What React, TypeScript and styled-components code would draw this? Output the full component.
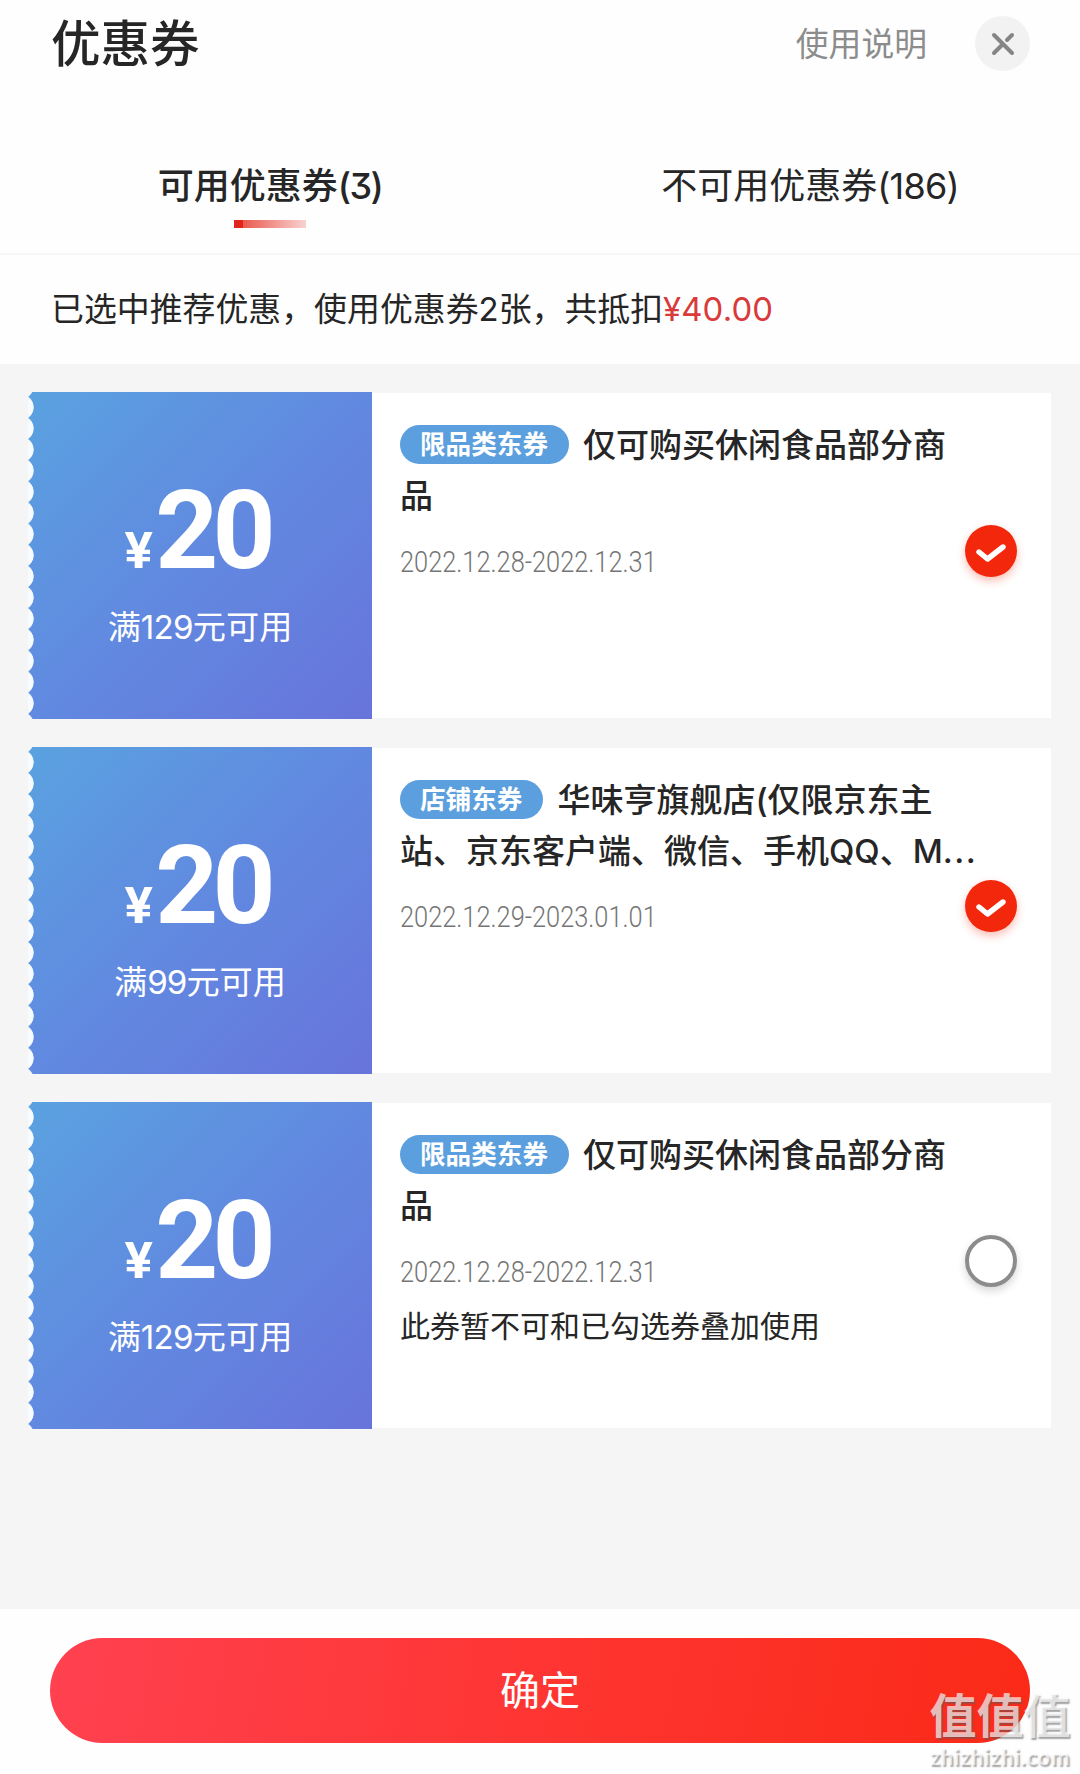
import React from "react";
import styled, { createGlobalStyle, css } from "styled-components";

const cjk = `"Noto Sans CJK SC", sans-serif`;

const GlobalStyle = createGlobalStyle`
  * { box-sizing: border-box; }
  html, body { margin: 0; padding: 0; background: #fefefe; }
  body {
    font-family: Inter, ${cjk};
    font-feature-settings: "cv09";
    color: #262626;
  }
  button { border: 0; margin: 0; padding: 0; font: inherit; color: inherit; background: none; }
`;

const Sheet = styled.div`
  position: relative;
  width: 1080px;
  height: 1774px;
  display: flex;
  flex-direction: column;
  overflow: hidden;
  background: #fefefe;
`;

const Header = styled.header`
  height: 116px;
  padding: 0 50px 29px 51px;
  display: flex;
  align-items: center;
`;

const Title = styled.h1`
  margin: 0 auto 0 0;
  font-size: 49.5px;
  font-weight: 500;
  line-height: 60px;
`;

const HelpLink = styled.a`
  font-size: 32.8px;
  line-height: 40px;
  color: #8c8c8c;
  margin-right: 48px;
`;

const CloseButton = styled.button`
  width: 55px;
  height: 55px;
  border-radius: 50%;
  background: #f2f2f2;
  display: grid;
  place-items: center;
`;

const Tabs = styled.nav`
  height: 139px;
  display: grid;
  grid-template-columns: 1fr 1fr;
  border-bottom: 2px solid #f6f6f6;
`;

const Tab = styled.button<{ $active?: boolean }>`
  display: flex;
  flex-direction: column;
  align-items: center;
  padding-top: 46px;
  font-size: 36px;
  line-height: 48px;
  font-weight: ${(p) => (p.$active ? 500 : 400)};
`;

const TabCount = styled.span<{ $track: string }>`
  letter-spacing: ${(p) => p.$track};
`;

const Underline = styled.span`
  width: 72px;
  height: 8px;
  margin-top: 10px;
  background: linear-gradient(90deg, #e1251b 0 9px, #ea5a50 9px, #f8d3d0 100%);
`;

const Summary = styled.p`
  margin: 0;
  height: 109px;
  padding: 0 51px 2px;
  display: flex;
  align-items: center;
  font-size: 32.9px;
  line-height: 40px;
  white-space: pre;
`;

const Amount = styled.span`
  color: #d93a3a;
  letter-spacing: 0.1px;
`;

const List = styled.main`
  flex: 1;
  display: flex;
  flex-direction: column;
  gap: 28px;
  padding: 28px 29px 0 28px;
  background: #f5f5f5;
`;

const Card = styled.article`
  height: 327px;
  display: flex;
  align-items: center;
`;

const Value = styled.div`
  flex: 0 0 344px;
  height: 327px;
  display: flex;
  flex-direction: column;
  align-items: center;
  color: #fff;
  padding-top: 75px;
  background:
    radial-gradient(circle at -7px 10.6px, #f8fbfd 12.3px, transparent 13px) 0 4.7px / 14px 21.15px repeat-y,
    linear-gradient(135deg, #5aa2e0 0%, #6189e0 50%, #6874db 100%);
  border-radius: 5px 0 0 5px;
`;

const Price = styled.div`
  font-family: Roboto, sans-serif;
  font-weight: 700;
  font-size: 110px;
  line-height: 128px;
  letter-spacing: -6px;
  margin-right: 4px;
  display: flex;
  align-items: baseline;
`;

const Yen = styled.span`
  font-size: 50px;
  letter-spacing: 0;
  margin-right: 2px;
  transform: scaleX(1.06);
  transform-origin: right;
`;

const Threshold = styled.div<{ $track: string }>`
  margin-top: -8px;
  font-size: 33.2px;
  line-height: 40px;
  display: flex;
  span { letter-spacing: ${(p) => p.$track}; }
`;

const Info = styled.div`
  flex: 1;
  min-width: 0;
  height: 325px;
  background: #fff;
  display: flex;
  padding: 27px 34px 0 28px;
`;

const Body = styled.div`
  flex: 1;
  min-width: 0;
`;

const Name = styled.h2`
  margin: 0;
  width: 580px;
  height: 103px;
  font-size: 33px;
  font-weight: 500;
  line-height: 51.3px;
  white-space: nowrap;
`;

const Tag = styled.span`
  display: inline-block;
  height: 39px;
  line-height: 39px;
  padding: 0 21px 0 20px;
  margin-right: 14px;
  border-radius: 20px;
  background: #5c9fde;
  color: #fff;
  font-size: 25.6px;
  font-weight: 700;
  vertical-align: 3px;
`;

const Period = styled.time`
  display: block;
  width: max-content;
  margin-top: 19px;
  font-family: Roboto, sans-serif;
  font-weight: 300;
  font-size: 29.5px;
  line-height: 40px;
  color: #757575;
  transform: scaleX(0.86);
  transform-origin: left;
`;

const Note = styled.p`
  margin: 14px 0 0;
  font-size: 30px;
  line-height: 40px;
`;

const Radio = styled.button<{ $checked: boolean }>`
  flex: none;
  width: 52px;
  height: 52px;
  margin-top: 105px;
  border-radius: 50%;
  display: grid;
  place-items: center;
  ${(p) =>
    p.$checked
      ? css`
          background: #f2270c;
          box-shadow: 0 4px 8px rgba(242, 39, 12, 0.3);
        `
      : css`
          border: 4.5px solid #8c8c8c;
          box-shadow: 0 4px 8px rgba(0, 0, 0, 0.16);
        `}
`;

const Footer = styled.footer`
  height: 165px;
  padding: 29px 50px 0;
`;

const Confirm = styled.button`
  width: 980px;
  height: 105px;
  border-radius: 53px;
  background: linear-gradient(100deg, #ff4150 0%, #fe3532 50%, #fb2a17 100%);
  color: #fff;
  font-size: 40px;
  line-height: 105px;
`;

const Watermark = styled.div`
  position: absolute;
  right: 9px;
  bottom: 4px;
  width: 142px;
  display: flex;
  flex-direction: column;
  align-items: center;
  color: rgba(255, 255, 255, 0.68);
  white-space: nowrap;
`;

const MarkName = styled.span`
  font-family: "Liberation Sans", ${cjk};
  font-size: 47px;
  line-height: 55px;
  font-weight: 700;
  text-shadow: 1.5px 1.5px 1.5px rgba(90, 90, 90, 0.55);
`;

const MarkSite = styled.span`
  font-family: Lato, sans-serif;
  font-size: 22px;
  line-height: 26px;
  font-weight: 700;
  letter-spacing: 0.7px;
  text-shadow: 1.5px 1.5px 1.5px rgba(90, 90, 90, 0.55);
`;

const Dots = styled.span`
  letter-spacing: 1.5px;
`;

type Coupon = {
  limit: string;
  track: string;
  tag: string;
  lines: [string, string];
  clipped?: boolean;
  period: string;
  note?: string;
  checked: boolean;
};

const coupons: Coupon[] = [
  {
    limit: "129",
    track: "-0.8px",
    tag: "限品类东券",
    lines: ["仅可购买休闲食品部分商", "品"],
    period: "2022.12.28-2022.12.31",
    checked: true,
  },
  {
    limit: "99",
    track: "-1px",
    tag: "店铺东券",
    lines: ["华味亨旗舰店(仅限京东主", "站、京东客户端、微信、手机QQ、M"],
    clipped: true,
    period: "2022.12.29-2023.01.01",
    checked: true,
  },
  {
    limit: "129",
    track: "-0.8px",
    tag: "限品类东券",
    lines: ["仅可购买休闲食品部分商", "品"],
    period: "2022.12.28-2022.12.31",
    note: "此券暂不可和已勾选券叠加使用",
    checked: false,
  },
];

const CouponCard = ({ limit, track, tag, lines, clipped, period, note, checked }: Coupon) => (
  <Card>
    <Value>
      <Price>
        <Yen>¥</Yen>20
      </Price>
      <Threshold $track={track}>
        满<span>{limit}</span>元可用
      </Threshold>
    </Value>
    <Info>
      <Body>
        <Name>
          <Tag>{tag}</Tag>
          {lines[0]}
          <br />
          {lines[1]}
          {clipped && <Dots>...</Dots>}
        </Name>
        <Period>{period}</Period>
        {note && <Note>{note}</Note>}
      </Body>
      <Radio $checked={checked} aria-label="选择优惠券">
        {checked && (
          <svg width="52" height="52" viewBox="0 0 52 52" fill="none">
            <path
              d="M14 27 L22.5 34 L38 22"
              stroke="#fff"
              strokeWidth="5.4"
              strokeLinecap="round"
              strokeLinejoin="round"
            />
          </svg>
        )}
      </Radio>
    </Info>
  </Card>
);

export default function App() {
  return (
    <>
      <GlobalStyle />
      <Sheet>
        <Header>
          <Title>优惠券</Title>
          <HelpLink>使用说明</HelpLink>
          <CloseButton aria-label="关闭">
            <svg width="24" height="24" viewBox="0 0 24 24" fill="none">
              <path
                d="M3 3 L21 21 M3 21 L11.5 12.5 M16 8 L21 3"
                stroke="#858585"
                strokeWidth="4"
                strokeLinecap="round"
              />
            </svg>
          </CloseButton>
        </Header>
        <Tabs>
          <Tab $active>
            <span>
              可用优惠券<TabCount $track="-1.6px">(3)</TabCount>
            </span>
            <Underline />
          </Tab>
          <Tab>
            <span>
              不可用优惠券<TabCount $track="-0.8px">(186)</TabCount>
            </span>
          </Tab>
        </Tabs>
        <Summary>
          已选中推荐优惠，使用优惠券2张，共抵扣<Amount>¥40.00</Amount>
        </Summary>
        <List>
          {coupons.map((c, i) => (
            <CouponCard key={i} {...c} />
          ))}
        </List>
        <Footer>
          <Confirm>确定</Confirm>
        </Footer>
        <Watermark>
          <MarkName>值值值</MarkName>
          <MarkSite>zhizhizhi.com</MarkSite>
        </Watermark>
      </Sheet>
    </>
  );
}
